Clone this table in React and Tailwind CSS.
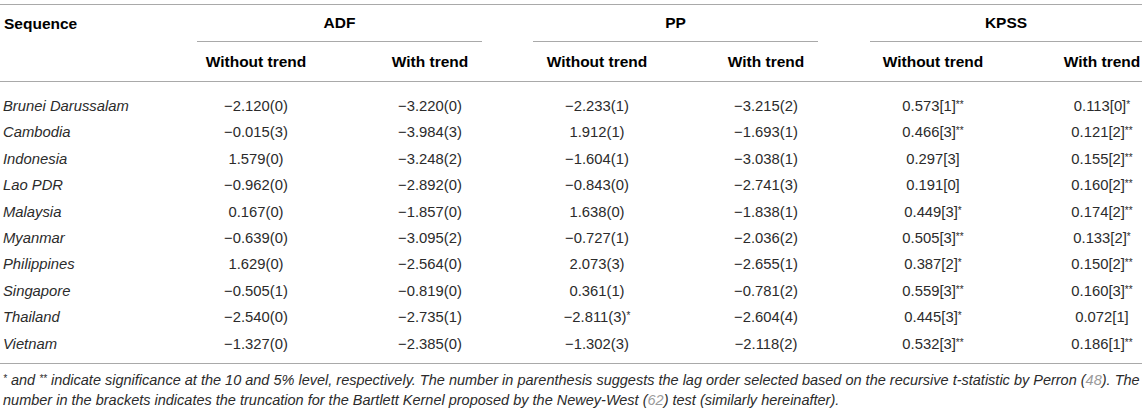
import React from "react";

const rows = [
  ["Brunei Darussalam", "−2.120(0)", "−3.220(0)", "−2.233(1)", "−3.215(2)", "0.573[1]**", "0.113[0]*"],
  ["Cambodia", "−0.015(3)", "−3.984(3)", "1.912(1)", "−1.693(1)", "0.466[3]**", "0.121[2]**"],
  ["Indonesia", "1.579(0)", "−3.248(2)", "−1.604(1)", "−3.038(1)", "0.297[3]", "0.155[2]**"],
  ["Lao PDR", "−0.962(0)", "−2.892(0)", "−0.843(0)", "−2.741(3)", "0.191[0]", "0.160[2]**"],
  ["Malaysia", "0.167(0)", "−1.857(0)", "1.638(0)", "−1.838(1)", "0.449[3]*", "0.174[2]**"],
  ["Myanmar", "−0.639(0)", "−3.095(2)", "−0.727(1)", "−2.036(2)", "0.505[3]**", "0.133[2]*"],
  ["Philippines", "1.629(0)", "−2.564(0)", "2.073(3)", "−2.655(1)", "0.387[2]*", "0.150[2]**"],
  ["Singapore", "−0.505(1)", "−0.819(0)", "0.361(1)", "−0.781(2)", "0.559[3]**", "0.160[3]**"],
  ["Thailand", "−2.540(0)", "−2.735(1)", "−2.811(3)*", "−2.604(4)", "0.445[3]*", "0.072[1]"],
  ["Vietnam", "−1.327(0)", "−2.385(0)", "−1.302(3)", "−2.118(2)", "0.532[3]**", "0.186[1]**"],
];

function Val({ v }) {
  const m = v.match(/^(.*?)(\**)$/);
  return (
    <span>
      {m[1]}
      {m[2] && <span className="relative -top-[3px] text-[10px]">{m[2]}</span>}
    </span>
  );
}

const colCls = "flex items-center justify-center";

export default function App() {
  return (
    <div className="w-[1142px] pt-[4px] font-['Liberation_Sans',Arial,sans-serif] bg-white">
      <div className="h-px bg-[#a9a9a9]" />
      <div className="grid grid-cols-[171px_170px_178px_156px_182px_152px_133px]">
        {/* group header row */}
        <div className="h-[37px] flex items-center pl-[4px] text-[15.5px] font-bold text-black">Sequence</div>
        <div className="col-span-2 h-[37px] ml-[26px] mr-[37px] border-b border-[#a9a9a9] flex items-center justify-center text-[15.5px] font-bold text-black">ADF</div>
        <div className="col-span-2 h-[37px] ml-[14px] mr-[39px] border-b border-[#a9a9a9] flex items-center justify-center text-[15.5px] font-bold text-black">PP</div>
        <div className="col-span-2 h-[37px] ml-[13px] border-b border-[#a9a9a9] flex items-center justify-center text-[15.5px] font-bold text-black">KPSS</div>
        {/* sub header row */}
        <div className="h-[40px] border-b border-[#a9a9a9]" />
        {["Without trend", "With trend", "Without trend", "With trend", "Without trend"].map((t, i) => (
          <div key={i} className={`h-[40px] border-b border-[#a9a9a9] ${colCls} text-[15.5px] font-bold text-black whitespace-nowrap`}>{t}</div>
        ))}
        <div className={`h-[40px] border-b border-[#a9a9a9] ${colCls} pl-[53px] text-[15.5px] font-bold text-black whitespace-nowrap`}>With trend</div>
      </div>
      <div className="pt-[11px] pb-[6px] border-b border-[#a9a9a9]">
        {rows.map((r) => (
          <div key={r[0]} className="grid grid-cols-[171px_170px_178px_156px_182px_152px_133px] h-[26.4px] text-[14.8px] text-[#2b2b2b]">
            <div className="flex items-center pl-[3px] italic whitespace-nowrap">{r[0]}</div>
            {r.slice(1, 6).map((v, i) => (
              <div key={i} className={`${colCls} whitespace-nowrap`}><Val v={v} /></div>
            ))}
            <div className={`${colCls} pl-[53px] whitespace-nowrap`}><Val v={r[6]} /></div>
          </div>
        ))}
      </div>
      <div className="pt-[7px] pl-[3px] text-[14.5px] leading-[18px] italic text-[#2b2b2b] whitespace-nowrap">
        <span className="relative -top-[3px] text-[10px]">*</span> and <span className="relative -top-[3px] text-[10px]">**</span> indicate significance at the 10 and 5% level, respectively. The number in parenthesis suggests the lag order selected based on the recursive t-statistic by Perron (<span className="text-[#9a9a9a]">48</span>). The
        <br />
        number in the brackets indicates the truncation for the Bartlett Kernel proposed by the Newey-West (<span className="text-[#9a9a9a]">62</span>) test (similarly hereinafter).
      </div>
    </div>
  );
}
